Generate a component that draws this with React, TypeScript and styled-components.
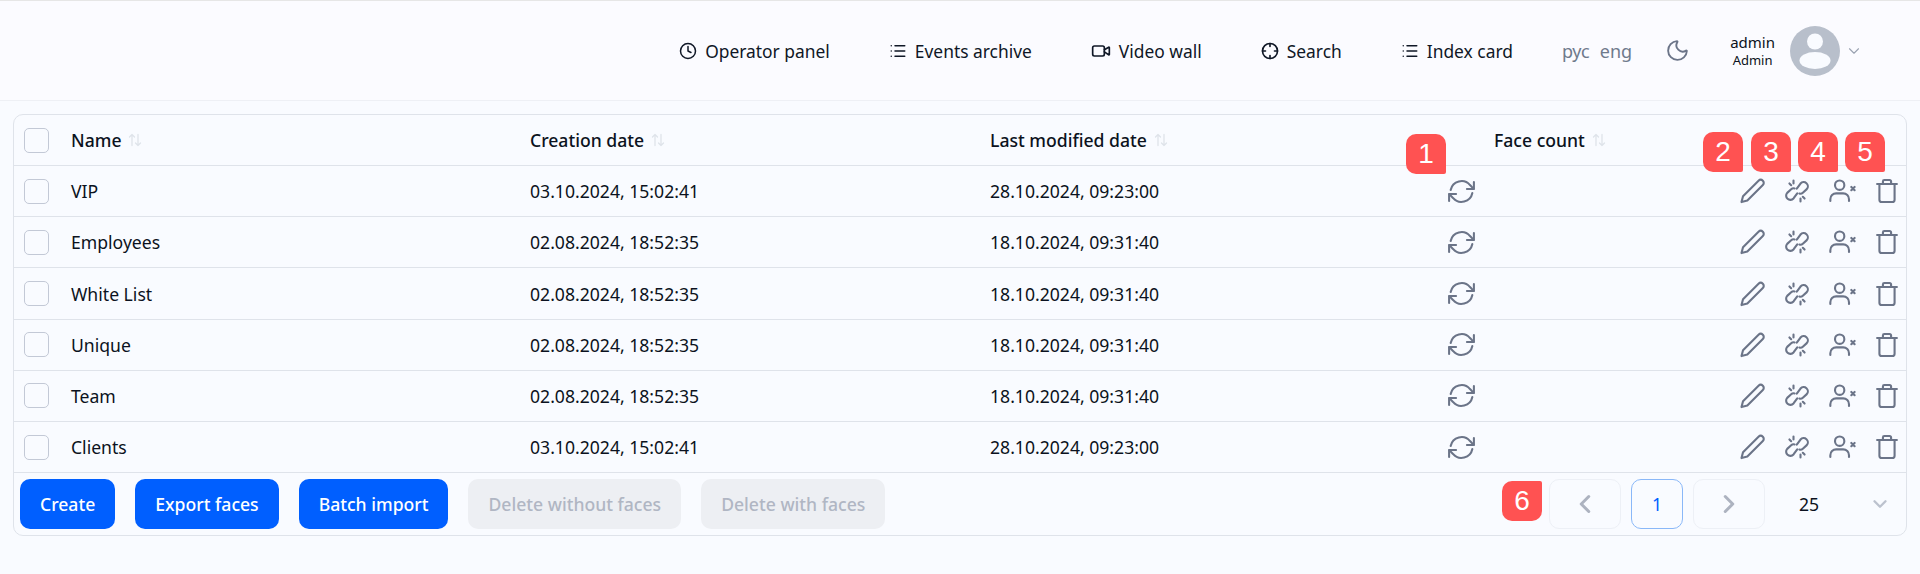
import React from "react"
import styled, { createGlobalStyle } from "styled-components"
import { ChevronDown, ChevronLeft, ChevronRight, Clock, List, Moon, Video } from "lucide-react"

const GlobalStyle = createGlobalStyle`
  html, body {
    margin: 0;
    padding: 0;
    background: #f9fbff;
    color: #0b1220;
    font-family: "Noto Sans", "Open Sans", sans-serif;
    font-size: 17.6px;
  }
`

const rows = [
  { name: "VIP", created: "03.10.2024, 15:02:41", modified: "28.10.2024, 09:23:00" },
  { name: "Employees", created: "02.08.2024, 18:52:35", modified: "18.10.2024, 09:31:40" },
  { name: "White List", created: "02.08.2024, 18:52:35", modified: "18.10.2024, 09:31:40" },
  { name: "Unique", created: "02.08.2024, 18:52:35", modified: "18.10.2024, 09:31:40" },
  { name: "Team", created: "02.08.2024, 18:52:35", modified: "18.10.2024, 09:31:40" },
  { name: "Clients", created: "03.10.2024, 15:02:41", modified: "28.10.2024, 09:23:00" },
]

const badges = [
  { label: "1", x: 1392, y: 19 },
  { label: "2", x: 1689, y: 17 },
  { label: "3", x: 1737, y: 17 },
  { label: "4", x: 1784, y: 17 },
  { label: "5", x: 1831, y: 17 },
  { label: "6", x: 1488, y: 366, top: true },
]

const SearchIcon = () => (
  <svg width="18" height="18" viewBox="0 0 24 24" fill="none" stroke="currentColor" strokeWidth="2.2" strokeLinecap="round">
    <circle cx="12" cy="12" r="10" />
    <path d="M12 2v4M12 18v4M2 12h4M18 12h4" />
  </svg>
)

const SyncIcon = () => (
  <svg width="31" height="31" viewBox="0 0 24 24" fill="none" stroke="currentColor" strokeWidth="1.6" strokeLinecap="round" strokeLinejoin="round">
    <path d="M3.6 10.8A8.6 8.6 0 0 1 18.6 7L21.4 10" />
    <path d="M21.6 4.6V10H16.2" />
    <path d="M20.4 13.2A8.6 8.6 0 0 1 5.4 17L2.6 14" />
    <path d="M2.4 19.4V14H7.8" />
  </svg>
)

const PenIcon = () => (
  <svg width="28" height="28" viewBox="0 0 24 24" fill="none" stroke="currentColor" strokeWidth="1.8" strokeLinecap="round" strokeLinejoin="round">
    <path d="M3 21.5l1.3-5L17.6 3.2a2.6 2.6 0 0 1 3.7 3.7L8 20.2z" />
  </svg>
)

const UnlinkIcon = () => (
  <svg width="28" height="28" viewBox="0 0 24 24" fill="none" stroke="currentColor" strokeWidth="1.8" strokeLinecap="round" strokeLinejoin="round">
    <path d="M11.8 10L15 5.6a3.6 3.6 0 0 1 5.4 4.8L17 13.5c-.9.8-1.9 1-3 .7" />
    <path d="M12.2 14L9 18.4a3.6 3.6 0 0 1-5.4-4.8L7 10.5c.9-.8 1.9-1 3-.7" />
    <path d="M9 3v2.5M5.5 5.5L7 7M15 21v-2.5M18.5 18.5L17 17" />
  </svg>
)

const UserRemoveIcon = () => (
  <svg width="28" height="28" viewBox="0 0 24 24" fill="none" stroke="currentColor" strokeWidth="1.8" strokeLinecap="round" strokeLinejoin="round">
    <circle cx="10" cy="7" r="4" />
    <path d="M2 20.5v-1.5A5 5 0 0 1 7 14h6a5 5 0 0 1 5 5v1.5" />
    <path d="M20 8.5l2.8 2.8M22.8 8.5L20 11.3" />
  </svg>
)

const TrashIcon = () => (
  <svg width="28" height="28" viewBox="0 0 24 24" fill="none" stroke="currentColor" strokeWidth="1.8" strokeLinecap="round" strokeLinejoin="round">
    <path d="M3.5 6h17" />
    <path d="M8.5 6V3.8a1.2 1.2 0 0 1 1.2-1.2h4.6a1.2 1.2 0 0 1 1.2 1.2V6" />
    <path d="M5.5 6v13.4A2 2 0 0 0 7.5 21.4h9a2 2 0 0 0 2-2V6" />
  </svg>
)

const SortIcon = () => (
  <SortMark width="14" height="14" viewBox="0 0 14 14" fill="none" stroke="currentColor" strokeWidth="1.3" strokeLinecap="round" strokeLinejoin="round">
    <path d="M4 12.5V1.5M1.5 4L4 1.5 6.5 4" />
    <path d="M10 1.5v11M7.5 10l2.5 2.5 2.5-2.5" />
  </SortMark>
)

const AvatarIcon = () => (
  <svg width="50" height="50" viewBox="0 0 50 50">
    <circle cx="25" cy="25" r="25" fill="#b8bfcb" />
    <circle cx="25" cy="15.5" r="8" fill="#f9fbff" />
    <ellipse cx="25" cy="34.5" rx="15.5" ry="8.5" fill="#f9fbff" />
  </svg>
)

export default function App() {
  return (
    <>
      <GlobalStyle />
      <Header>
        <NavItem><Clock size={18} strokeWidth={2} />Operator panel</NavItem>
        <NavItem><List size={18} strokeWidth={2} />Events archive</NavItem>
        <NavItem><Video size={20} strokeWidth={2} />Video wall</NavItem>
        <NavItem><SearchIcon />Search</NavItem>
        <NavItem><List size={18} strokeWidth={2} />Index card</NavItem>
        <Languages>
          <span>рус</span>
          <span>eng</span>
        </Languages>
        <ThemeToggle><Moon size={25} strokeWidth={1.8} /></ThemeToggle>
        <UserBlock>
          <UserNames>
            <UserLogin>admin</UserLogin>
            <UserRole>Admin</UserRole>
          </UserNames>
          <AvatarIcon />
          <ChevronDown size={18} strokeWidth={1.5} color="#9aa2b1" />
        </UserBlock>
      </Header>

      <Card>
        <Row>
          <Checkbox />
          <HeadCell>Name<SortIcon /></HeadCell>
          <HeadCell>Creation date<SortIcon /></HeadCell>
          <HeadCell>Last modified date<SortIcon /></HeadCell>
          <span />
          <HeadCell>Face count<SortIcon /></HeadCell>
        </Row>
        {rows.map((row) => (
          <Row key={row.name}>
            <Checkbox />
            <span>{row.name}</span>
            <span>{row.created}</span>
            <span>{row.modified}</span>
            <IconCell><SyncIcon /></IconCell>
            <Actions>
              <IconCell><PenIcon /></IconCell>
              <IconCell><UnlinkIcon /></IconCell>
              <IconCell><UserRemoveIcon /></IconCell>
              <IconCell><TrashIcon /></IconCell>
            </Actions>
          </Row>
        ))}
        <Footer>
          <Buttons>
            <Button>Create</Button>
            <Button>Export faces</Button>
            <Button>Batch import</Button>
            <Button disabled>Delete without faces</Button>
            <Button disabled>Delete with faces</Button>
          </Buttons>
          <Pager>
            <PagerArrow><ChevronLeft size={30} strokeWidth={2.4} /></PagerArrow>
            <PageNumber>1</PageNumber>
            <PagerArrow><ChevronRight size={30} strokeWidth={2.4} /></PagerArrow>
            <PageSize>
              <span>25</span>
              <ChevronDown size={22} strokeWidth={2.6} color="#bcc2ce" />
            </PageSize>
          </Pager>
        </Footer>
        {badges.map((b) => (
          <Badge key={b.label} $x={b.x} $y={b.y} $top={b.top}>{b.label}</Badge>
        ))}
      </Card>
    </>
  )
}

const Header = styled.header`
  display: flex;
  align-items: center;
  justify-content: flex-end;
  box-sizing: border-box;
  height: 101px;
  padding-right: 57px;
  background: #fbfbff;
  border-top: 1px solid #e6e6e6;
  border-bottom: 1px solid #eef0f5;
`

const NavItem = styled.a`
  display: flex;
  align-items: center;
  gap: 8px;
  margin-right: 59px;
  color: #0f1726;
  font-size: 17.4px;
  white-space: nowrap;

  &:nth-child(5) {
    margin-right: 49px;
  }
`

const Languages = styled.div`
  display: flex;
  gap: 10px;
  margin-right: 33px;
  color: #6f7a8c;
  font-size: 18px;
`

const ThemeToggle = styled.div`
  display: flex;
  margin-right: 40px;
  color: #6b7488;
`

const UserBlock = styled.div`
  display: flex;
  align-items: center;
  gap: 5px;
`

const UserNames = styled.div`
  display: flex;
  flex-direction: column;
  align-items: center;
  margin-right: 10px;
`

const UserLogin = styled.span`
  font-size: 15px;
  line-height: 20px;
`

const UserRole = styled.span`
  font-size: 13px;
  line-height: 17px;
`

const Card = styled.section`
  position: relative;
  box-sizing: border-box;
  width: 1894px;
  height: 422px;
  margin: 13px 0 0 13px;
  border: 1px solid #dfe3ea;
  border-radius: 10px;
`

const Row = styled.div`
  display: grid;
  grid-template-columns: 57px 459px 460px 459px 45px 1fr;
  align-items: center;
  box-sizing: border-box;
  height: 51.17px;
  border-bottom: 1px solid #dfe3ea;

  & > :nth-child(5) {
    justify-content: flex-start;
    margin-left: -3px;
  }
`

const Checkbox = styled.span`
  display: block;
  box-sizing: border-box;
  width: 25px;
  height: 25px;
  margin-left: 10px;
  border: 1px solid #c3c9d6;
  border-radius: 5px;
`

const HeadCell = styled.span`
  display: flex;
  align-items: center;
  gap: 7px;
  font-weight: 500;
`

const SortMark = styled.svg`
  color: #dfe3ea;
`

const IconCell = styled.span`
  display: flex;
  align-items: center;
  justify-content: center;
  color: #6b7488;
`

const Actions = styled.div`
  display: flex;
  justify-content: flex-end;
  gap: 17px;
  padding-right: 5px;
`

const Footer = styled.div`
  display: flex;
  align-items: flex-start;
  justify-content: space-between;
  padding: 6px 0 0 6px;
`

const Buttons = styled.div`
  display: flex;
  gap: 20px;
`

const Button = styled.button`
  height: 50px;
  padding: 0 20px;
  border: none;
  border-radius: 10px;
  background: ${(p) => (p.disabled ? "#edeff3" : "#005fff")};
  color: ${(p) => (p.disabled ? "#b0b6c3" : "#ffffff")};
  font-family: inherit;
  font-size: 17.6px;
  font-weight: 500;
`

const Pager = styled.div`
  display: flex;
  align-items: center;
  gap: 10px;
`

const PagerArrow = styled.span`
  display: flex;
  align-items: center;
  justify-content: center;
  box-sizing: border-box;
  width: 72px;
  height: 50px;
  border: 1px solid #edf0f6;
  border-radius: 10px;
  color: #adb3c0;
`

const PageNumber = styled.span`
  display: flex;
  align-items: center;
  justify-content: center;
  box-sizing: border-box;
  width: 52px;
  height: 50px;
  border: 1px solid #8ab8f8;
  border-radius: 10px;
  color: #005fff;
`

const PageSize = styled.div`
  display: flex;
  align-items: center;
  justify-content: space-between;
  box-sizing: border-box;
  width: 131px;
  padding: 0 15px 0 24px;
`

const Badge = styled.span<{ $x: number; $y: number; $top?: boolean }>`
  position: absolute;
  left: ${(p) => p.$x}px;
  top: ${(p) => p.$y}px;
  display: flex;
  align-items: center;
  justify-content: center;
  width: 40px;
  height: 40px;
  border-radius: ${(p) => (p.$top ? "10px 2px 10px 10px" : "10px 10px 2px 10px")};
  background: #ff5252;
  color: #ffffff;
  font-family: "Liberation Sans", Arial, sans-serif;
  font-size: 28px;
`
